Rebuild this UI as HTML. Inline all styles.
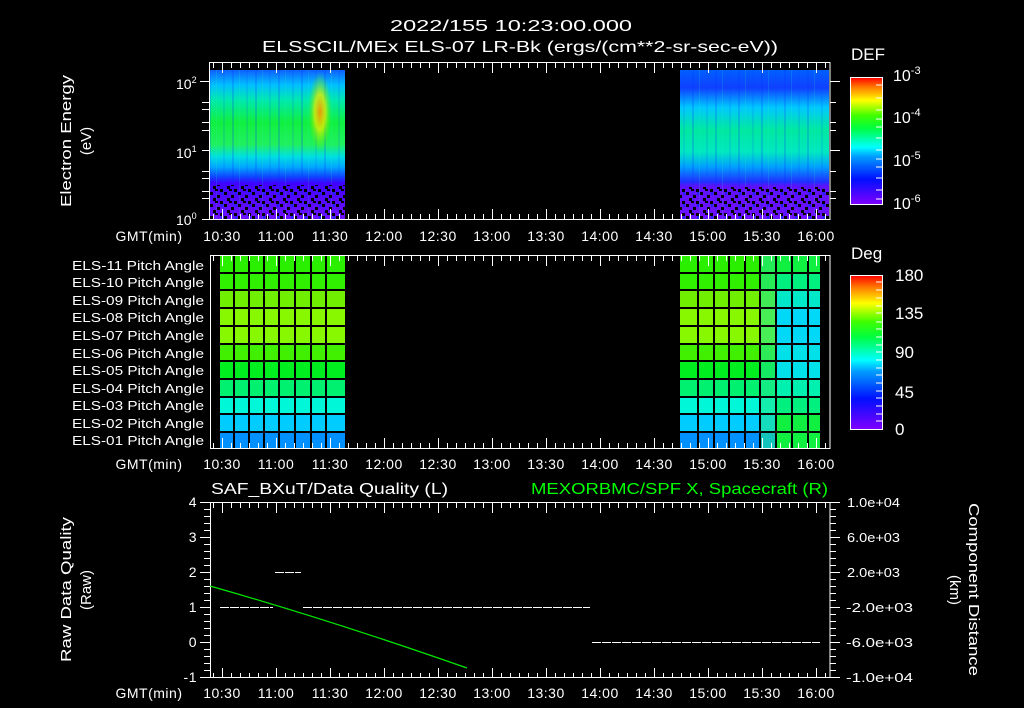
<!DOCTYPE html>
<html><head><meta charset="utf-8"><style>
html,body{margin:0;padding:0;background:#000;}
body{position:relative;width:1024px;height:708px;overflow:hidden}
svg{display:block;position:absolute;left:0;top:0}
text{font-family:"Liberation Sans",sans-serif;fill:#fff;}
.tl{font-size:14px;letter-spacing:0.5px}
.mn{position:absolute;left:210px;width:620px;height:5px;background:repeating-linear-gradient(90deg,transparent 0px,transparent 3px,#fff 3px,#fff 4px,transparent 4px,transparent 9px);}
.mj{position:absolute;left:222px;width:600px;height:10px;background:repeating-linear-gradient(90deg,#fff 0px,#fff 1px,transparent 1px,transparent 54px);}
</style></head><body>
<svg width="1024" height="708" viewBox="0 0 1024 708" xmlns="http://www.w3.org/2000/svg">
<defs>
<linearGradient id="cb" x1="0" y1="1" x2="0" y2="0">
<stop offset="0" stop-color="#8000ff"/><stop offset="0.2" stop-color="#0010ff"/><stop offset="0.38" stop-color="#00a0ff"/><stop offset="0.45" stop-color="#00ffff"/><stop offset="0.6" stop-color="#00ff40"/><stop offset="0.7" stop-color="#40ff00"/><stop offset="0.82" stop-color="#ffff00"/><stop offset="0.92" stop-color="#ff8000"/><stop offset="1" stop-color="#ff0000"/>
</linearGradient>
<linearGradient id="spec" x1="0" y1="0" x2="0" y2="1">
<stop offset="0" stop-color="#1060ff"/><stop offset="0.1" stop-color="#00c0ff"/><stop offset="0.2" stop-color="#00e8b0"/><stop offset="0.35" stop-color="#10f040"/><stop offset="0.5" stop-color="#20f060"/><stop offset="0.58" stop-color="#00e0e0"/><stop offset="0.65" stop-color="#00a8ff"/><stop offset="0.72" stop-color="#1040ff"/><stop offset="0.76" stop-color="#4000ff"/><stop offset="1" stop-color="#7010ff"/>
</linearGradient>
<linearGradient id="spec2" x1="0" y1="0" x2="0" y2="1">
<stop offset="0" stop-color="#0060ff"/><stop offset="0.12" stop-color="#1040ff"/><stop offset="0.25" stop-color="#00c8ff"/><stop offset="0.4" stop-color="#00e8a0"/><stop offset="0.55" stop-color="#00e8c0"/><stop offset="0.65" stop-color="#00a0ff"/><stop offset="0.75" stop-color="#2030ff"/><stop offset="0.78" stop-color="#6010ff"/><stop offset="1" stop-color="#7010ff"/>
</linearGradient>
<radialGradient id="hot" cx="0.5" cy="0.5" r="0.5">
<stop offset="0" stop-color="#ff9000" stop-opacity="0.9"/><stop offset="0.45" stop-color="#e0f000" stop-opacity="0.8"/><stop offset="1" stop-color="#40f000" stop-opacity="0"/>
</radialGradient>
<pattern id="speck" width="14" height="12" patternUnits="userSpaceOnUse">
<rect x="0" y="0" width="3" height="3" fill="#000"/><rect x="7" y="3" width="3" height="3" fill="#000"/><rect x="3" y="6" width="3" height="3" fill="#000"/><rect x="10" y="9" width="3" height="3" fill="#000"/><rect x="11" y="0" width="2" height="3" fill="#2020ff"/><rect x="5" y="9" width="3" height="2" fill="#000"/>
</pattern>
<pattern id="streak" width="23" height="10" patternUnits="userSpaceOnUse">
<rect x="2" y="0" width="2" height="10" fill="#0030ff" opacity="0.2"/><rect x="9" y="0" width="1" height="10" fill="#20ffb0" opacity="0.15"/><rect x="16" y="0" width="2" height="10" fill="#0040ff" opacity="0.12"/>
</pattern>
</defs>

<text x="390" y="31" font-size="16" textLength="242" lengthAdjust="spacingAndGlyphs">2022/155 10:23:00.000</text>
<text x="262" y="52" font-size="16" textLength="516" lengthAdjust="spacingAndGlyphs">ELSSCIL/MEx ELS-07 LR-Bk  (ergs/(cm**2-sr-sec-eV))</text>

<!-- Panel 1 -->
<rect x="210" y="70" width="135" height="149" fill="url(#spec)"/>
<rect x="210" y="70" width="135" height="149" fill="url(#streak)"/>
<ellipse cx="320" cy="112" rx="12" ry="40" fill="url(#hot)"/>
<rect x="210" y="185" width="135" height="34" fill="url(#speck)"/>
<rect x="680" y="70" width="149" height="149" fill="url(#spec2)"/>
<rect x="680" y="70" width="149" height="149" fill="url(#streak)"/>
<rect x="680" y="187" width="149" height="32" fill="url(#speck)"/>
<rect x="209.5" y="62.5" width="620.5" height="157" fill="none" stroke="#fff"/>
<g stroke="#fff">
<path d="M200 81.5h10M202 150.5h8M202 219.5h8M202 102.5h8M202 109.5h8M202 122.5h8M202 130.5h8M202 171.5h8M202 178.5h8M202 191.5h8M202 198.5h8M830 81.5h10M830 150.5h10M830 102.5h6M830 122.5h6M830 130.5h6M830 171.5h6M830 191.5h6M830 198.5h6"/>
</g>
<text x="176" y="89" font-size="14">10<tspan font-size="9" dy="-6">2</tspan></text>
<text x="176" y="158" font-size="14">10<tspan font-size="9" dy="-6">1</tspan></text>
<text x="176" y="225" font-size="14">10<tspan font-size="9" dy="-6">0</tspan></text>
<text transform="translate(71,207) rotate(-90)" font-size="15" textLength="132" lengthAdjust="spacingAndGlyphs">Electron Energy</text>
<text transform="translate(91,141) rotate(-90)" font-size="15" text-anchor="middle">(eV)</text>
<g class="tl" text-anchor="middle">
<text x="149" y="241">GMT(min)</text>
<text x="222" y="241">10:30</text><text x="276" y="241">11:00</text><text x="330" y="241">11:30</text><text x="384" y="241">12:00</text><text x="438" y="241">12:30</text><text x="492" y="241">13:00</text><text x="546" y="241">13:30</text><text x="600" y="241">14:00</text><text x="654" y="241">14:30</text><text x="708" y="241">15:00</text><text x="762" y="241">15:30</text><text x="816" y="241">16:00</text>
</g>
<text x="851" y="60" font-size="17">DEF</text>
<rect x="850.5" y="77.5" width="32" height="127" fill="url(#cb)" stroke="#fff"/>
<g stroke="#fff"><path d="M876 85h6M876 98h6M876 110h6M876 119h6M876 127h6M876 138h6M876 150h6M876 159h6M876 167h6M876 178h6M876 190h6M876 199h6"/></g>
<g font-size="16"><text x="893" y="81">10<tspan font-size="11" dy="-7">-3</tspan></text><text x="893" y="123">10<tspan font-size="11" dy="-7">-4</tspan></text><text x="893" y="166">10<tspan font-size="11" dy="-7">-5</tspan></text><text x="893" y="209">10<tspan font-size="11" dy="-7">-6</tspan></text></g>

<!-- Panel 2 -->
<g>
<rect x="220" y="256" width="125" height="18" fill="#2af000"/>
<rect x="220" y="273" width="125" height="18" fill="#30f000"/>
<rect x="220" y="290" width="125" height="18" fill="#70f000"/>
<rect x="220" y="308" width="125" height="18" fill="#88f800"/>
<rect x="220" y="326" width="125" height="18" fill="#88f800"/>
<rect x="220" y="344" width="125" height="17" fill="#40f000"/>
<rect x="220" y="361" width="125" height="18" fill="#00ee20"/>
<rect x="220" y="379" width="125" height="18" fill="#00f070"/>
<rect x="220" y="397" width="125" height="17" fill="#00f8d8"/>
<rect x="220" y="414" width="125" height="18" fill="#00ccff"/>
<rect x="220" y="432" width="125" height="16" fill="#0090ff"/>
</g>
<g>
<rect x="680" y="256" width="140" height="18" fill="#2af000"/>
<rect x="680" y="273" width="140" height="18" fill="#30f000"/>
<rect x="680" y="290" width="140" height="18" fill="#70f000"/>
<rect x="680" y="308" width="140" height="18" fill="#88f800"/>
<rect x="680" y="326" width="140" height="18" fill="#88f800"/>
<rect x="680" y="344" width="140" height="17" fill="#40f000"/>
<rect x="680" y="361" width="140" height="18" fill="#00ee20"/>
<rect x="680" y="379" width="140" height="18" fill="#00f070"/>
<rect x="680" y="397" width="140" height="17" fill="#00f8d8"/>
<rect x="680" y="414" width="140" height="18" fill="#00ccff"/>
<rect x="680" y="432" width="140" height="16" fill="#0090ff"/>
<rect x="776" y="256" width="44" height="18" fill="#10f040"/>
<rect x="776" y="273" width="44" height="18" fill="#00f080"/>
<rect x="776" y="290" width="44" height="18" fill="#00e8c8"/>
<rect x="776" y="308" width="44" height="36" fill="#00d8f8"/>
<rect x="776" y="344" width="44" height="35" fill="#00e0e8"/>
<rect x="776" y="379" width="44" height="18" fill="#00f0b0"/>
<rect x="776" y="397" width="44" height="17" fill="#00f080"/>
<rect x="776" y="414" width="44" height="34" fill="#10f040"/>
<rect x="760" y="256" width="16" height="192" fill="#20e890" opacity="0.6"/>
</g>
<g stroke="#000" stroke-width="2">
<path d="M220 273h125M220 290h125M220 308h125M220 326h125M220 344h125M220 361h125M220 379h125M220 397h125M220 414h125M220 432h125"/>
<path d="M234 256v192M249 256v192M264 256v192M279 256v192M295 256v192M311 256v192M326 256v192"/>
<path d="M680 273h140M680 290h140M680 308h140M680 326h140M680 344h140M680 361h140M680 379h140M680 397h140M680 414h140M680 432h140"/>
<path d="M698 256v192M714 256v192M729 256v192M745 256v192M760 256v192M776 256v192M792 256v192M808 256v192"/>
</g>
<rect x="210.5" y="255.5" width="619.5" height="193" fill="none" stroke="#fff"/>
<g font-size="13">
<text x="72" y="270" textLength="132" lengthAdjust="spacingAndGlyphs">ELS-11 Pitch Angle</text><text x="72" y="287" textLength="132" lengthAdjust="spacingAndGlyphs">ELS-10 Pitch Angle</text><text x="72" y="305" textLength="132" lengthAdjust="spacingAndGlyphs">ELS-09 Pitch Angle</text><text x="72" y="322" textLength="132" lengthAdjust="spacingAndGlyphs">ELS-08 Pitch Angle</text><text x="72" y="340" textLength="132" lengthAdjust="spacingAndGlyphs">ELS-07 Pitch Angle</text><text x="72" y="358" textLength="132" lengthAdjust="spacingAndGlyphs">ELS-06 Pitch Angle</text><text x="72" y="375" textLength="132" lengthAdjust="spacingAndGlyphs">ELS-05 Pitch Angle</text><text x="72" y="393" textLength="132" lengthAdjust="spacingAndGlyphs">ELS-04 Pitch Angle</text><text x="72" y="410" textLength="132" lengthAdjust="spacingAndGlyphs">ELS-03 Pitch Angle</text><text x="72" y="428" textLength="132" lengthAdjust="spacingAndGlyphs">ELS-02 Pitch Angle</text><text x="72" y="445" textLength="132" lengthAdjust="spacingAndGlyphs">ELS-01 Pitch Angle</text>
</g>
<g class="tl" text-anchor="middle">
<text x="149" y="469">GMT(min)</text>
<text x="222" y="469">10:30</text><text x="276" y="469">11:00</text><text x="330" y="469">11:30</text><text x="384" y="469">12:00</text><text x="438" y="469">12:30</text><text x="492" y="469">13:00</text><text x="546" y="469">13:30</text><text x="600" y="469">14:00</text><text x="654" y="469">14:30</text><text x="708" y="469">15:00</text><text x="762" y="469">15:30</text><text x="816" y="469">16:00</text>
</g>
<text x="851" y="259" font-size="17">Deg</text>
<rect x="850.5" y="275.5" width="32" height="154" fill="url(#cb)" stroke="#fff"/>
<g stroke="#fff"><path d="M876 282h6M876 290h6M876 298h6M876 306h6M876 313h6M876 322h6M876 329h6M876 337h6M876 345h6M876 352h6M876 360h6M876 368h6M876 375h6M876 383h6M876 391h6M876 398h6M876 406h6M876 414h6M876 421h6"/></g>
<g font-size="17"><text x="895" y="281">180</text><text x="895" y="319">135</text><text x="895" y="358">90</text><text x="895" y="398">45</text><text x="895" y="435">0</text></g>

<!-- Panel 3 -->
<text x="211" y="494" font-size="16" textLength="237" lengthAdjust="spacingAndGlyphs">SAF_BXuT/Data Quality (L)</text>
<text x="531" y="494" font-size="16" style="fill:#00ff00" textLength="297" lengthAdjust="spacingAndGlyphs">MEXORBMC/SPF X, Spacecraft (R)</text>
<rect x="210.5" y="502.5" width="619.5" height="175" fill="none" stroke="#fff"/>
<g stroke="#fff">
<path d="M200 502.5h10M200 537.5h10M200 572.5h10M200 607.5h10M200 642.5h10M200 677.5h10M204 509.5h6M204 516.5h6M204 523.5h6M204 530.5h6M204 544.5h6M204 551.5h6M204 558.5h6M204 565.5h6M204 579.5h6M204 586.5h6M204 593.5h6M204 600.5h6M204 614.5h6M204 621.5h6M204 628.5h6M204 635.5h6M204 649.5h6M204 656.5h6M204 663.5h6M204 670.5h6"/>
<path d="M830 502.5h10M830 537.5h10M830 572.5h10M830 607.5h10M830 642.5h10M830 677.5h10M830 509.5h6M830 516.5h6M830 523.5h6M830 530.5h6M830 544.5h6M830 551.5h6M830 558.5h6M830 565.5h6M830 579.5h6M830 586.5h6M830 593.5h6M830 600.5h6M830 614.5h6M830 621.5h6M830 628.5h6M830 635.5h6M830 649.5h6M830 656.5h6M830 663.5h6M830 670.5h6"/>
</g>
<g class="tl" text-anchor="end"><text x="197" y="507">4</text><text x="197" y="542">3</text><text x="197" y="577">2</text><text x="197" y="612">1</text><text x="197" y="647">0</text><text x="197" y="682">-1</text></g>
<g font-size="13"><text x="847" y="507" textLength="53" lengthAdjust="spacingAndGlyphs">1.0e+04</text><text x="847" y="542" textLength="53" lengthAdjust="spacingAndGlyphs">6.0e+03</text><text x="847" y="577" textLength="53" lengthAdjust="spacingAndGlyphs">2.0e+03</text><text x="846" y="612" textLength="67" lengthAdjust="spacingAndGlyphs">-2.0e+03</text><text x="846" y="647" textLength="67" lengthAdjust="spacingAndGlyphs">-6.0e+03</text><text x="846" y="682" textLength="67" lengthAdjust="spacingAndGlyphs">-1.0e+04</text></g>
<g stroke="#fff" stroke-dasharray="9,1">
<path d="M220 607.5h53M303 607.5h287M275 572.5h26M592 642.5h228"/>
</g>
<path d="M210 586 Q 330 620 467 668" fill="none" stroke="#00e800" stroke-width="1.2"/>
<text transform="translate(71,662) rotate(-90)" font-size="15" textLength="145" lengthAdjust="spacingAndGlyphs">Raw Data Quality</text>
<text transform="translate(91,590) rotate(-90)" font-size="15" text-anchor="middle">(Raw)</text>
<text transform="translate(969,503) rotate(90)" font-size="15" textLength="173" lengthAdjust="spacingAndGlyphs">Component Distance</text>
<text transform="translate(950,590) rotate(90)" font-size="15" text-anchor="middle">(km)</text>
<g class="tl" text-anchor="middle">
<text x="149" y="698">GMT(min)</text>
<text x="222" y="698">10:30</text><text x="276" y="698">11:00</text><text x="330" y="698">11:30</text><text x="384" y="698">12:00</text><text x="438" y="698">12:30</text><text x="492" y="698">13:00</text><text x="546" y="698">13:30</text><text x="600" y="698">14:00</text><text x="654" y="698">14:30</text><text x="708" y="698">15:00</text><text x="762" y="698">15:30</text><text x="816" y="698">16:00</text>
</g>
</svg>
<div class="mn" style="top:63px"></div><div class="mj" style="top:63px"></div>
<div class="mn" style="top:214px"></div><div class="mj" style="top:209px"></div>
<div class="mn" style="top:256px"></div><div class="mj" style="top:256px"></div>
<div class="mn" style="top:443px"></div><div class="mj" style="top:438px"></div>
<div class="mn" style="top:503px"></div><div class="mj" style="top:503px"></div>
<div class="mn" style="top:673px"></div><div class="mj" style="top:668px"></div>
</body></html>
